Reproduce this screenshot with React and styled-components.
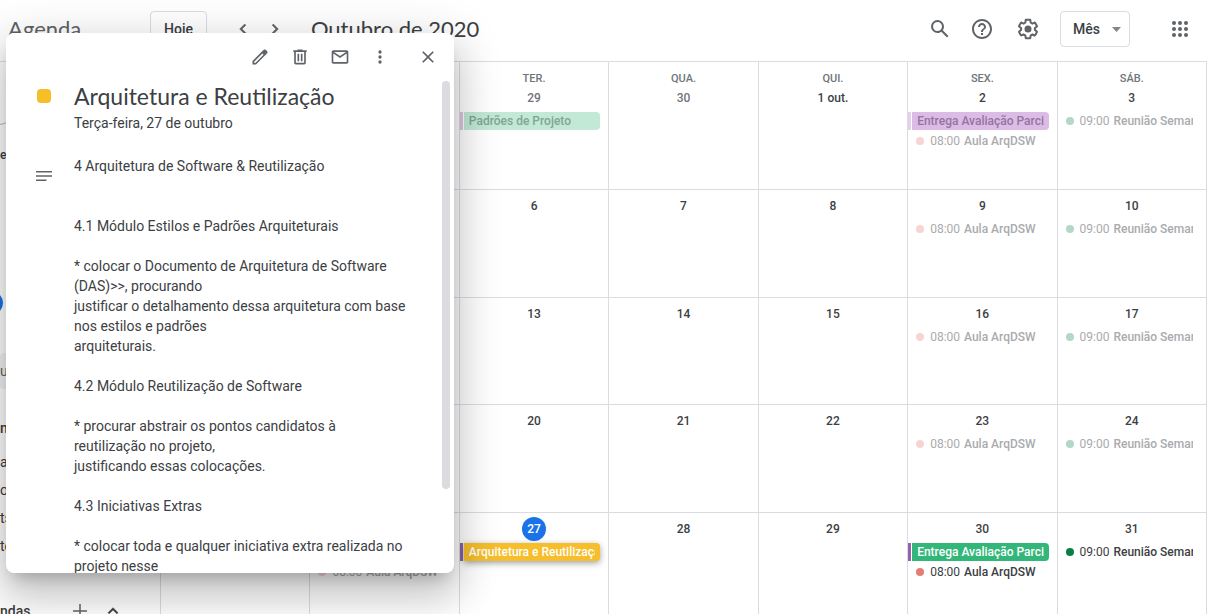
import React from 'react';
import styled, { createGlobalStyle } from 'styled-components';

const GlobalStyle = createGlobalStyle`
  *, *::before, *::after { box-sizing: border-box; }
  body {
    margin: 0;
    overflow: hidden;
    background: #fff;
    color: #3c4043;
    font-family: Roboto, "Liberation Sans", Arial, sans-serif;
  }
  button, select { font: inherit; color: inherit; }
  h1, h2, p, ul { margin: 0; padding: 0; font-weight: 400; }
`;

const Page = styled.div`
  position: relative;
  display: flex;
  flex-direction: column;
  height: 100vh;
  overflow: hidden;
`;

const Header = styled.header`
  display: flex;
  align-items: center;
  flex: none;
  height: 62px;
  padding: 0 7px 4px 8px;
  border-bottom: 1px solid #dadce0;
`;

const Brand = styled.span`
  width: 142px;
  font-family: Lato, Roboto, sans-serif;
  font-size: 22px;
  line-height: 28px;
  color: #5f6368;
`;

const OutlineButton = styled.button`
  height: 36px;
  padding: 0 13px;
  border: 1px solid #dadce0;
  border-radius: 4px;
  background: transparent;
  font-size: 14px;
  font-weight: 500;
`;

const Pager = styled.div`
  display: flex;
  margin: 0 20px;
`;

const IconButton = styled.button`
  display: inline-flex;
  align-items: center;
  justify-content: center;
  width: ${(p) => p.$size}px;
  height: ${(p) => p.$size}px;
  padding: 0;
  border: 0;
  border-radius: 50%;
  background: transparent;
  color: #5f6368;
`;

const Period = styled.h1`
  flex: 1;
  font-family: Lato, Roboto, sans-serif;
  font-size: 22px;
  line-height: 28px;
  white-space: nowrap;
`;

const Tools = styled.div`
  display: flex;
  align-items: center;
  gap: 6px;
`;

const HelpTools = styled.div`
  display: flex;
  gap: 2px;
`;

const ViewPicker = styled.label`
  position: relative;
  margin: 0 24px 0 6px;
`;

const ViewSelect = styled.select`
  appearance: none;
  display: block;
  width: 70px;
  height: 36px;
  padding: 0 12px;
  border: 1px solid #dadce0;
  border-radius: 4px;
  background: transparent;
  font-size: 14px;
  font-weight: 500;
`;

const Caret = styled.svg`
  position: absolute;
  right: 9px;
  top: 16px;
  pointer-events: none;
`;

const Main = styled.main`
  display: flex;
  flex: 1;
  min-height: 0;
`;

const Sidebar = styled.aside`
  display: flex;
  flex-direction: column;
  flex: none;
  width: 160px;
  overflow: hidden;
  font-size: 14px;
  line-height: 28px;
`;

const CreateEdge = styled.svg`
  display: block;
  flex: none;
  margin-top: 60px;
`;

const MiniMonth = styled.div`
  display: flex;
  flex-direction: column;
  justify-content: space-between;
  flex: none;
  height: 174px;
  margin-top: 13px;
  overflow: hidden;
  font-size: 12px;
  font-weight: 500;
`;

const MiniToday = styled.span`
  width: 24px;
  height: 24px;
  margin-left: -21px;
  border-radius: 50%;
  background: #1a73e8;
`;

const PeopleSearch = styled.div`
  flex: none;
  height: 36px;
  margin-top: 38px;
  border-radius: 4px;
  background: #f1f3f4;
  line-height: 36px;
  color: #5f6368;
`;

const ListHeading = styled.h2`
  display: flex;
  align-items: center;
  gap: 38px;
  flex: none;
  height: 28px;
  margin-top: ${(p) => p.$top}px;
  font-size: 14px;
  font-weight: 500;
`;

const HeadingIcons = styled.span`
  display: flex;
  align-items: center;
  gap: 11px;
  color: #5f6368;
`;

const CalendarList = styled.ul`
  margin-top: 6px;
  list-style: none;
`;

const Month = styled.section`
  display: grid;
  flex: 1;
  align-self: flex-start;
  grid-template-columns: repeat(7, minmax(0, 1fr));
  grid-template-rows: 128px repeat(4, minmax(0, 1fr));
  min-height: 558px;
  border-left: 1px solid #dadce0;
`;

const Day = styled.div`
  display: flex;
  flex-direction: column;
  align-items: center;
  padding-top: ${(p) => (p.$first ? 8 : 4)}px;
  border-right: 1px solid #dadce0;
  border-bottom: 1px solid #dadce0;
`;

const Weekday = styled.span`
  height: 16px;
  font-size: 11px;
  font-weight: 500;
  line-height: 18px;
  color: #70757a;
`;

const DayNumber = styled.span`
  min-width: 24px;
  height: 24px;
  border-radius: 12px;
  font-size: 12px;
  font-weight: 500;
  line-height: 24px;
  text-align: center;
  color: ${(p) => (p.$today ? '#fff' : p.$outside ? '#70757a' : '#3c4043')};
  background: ${(p) => (p.$today ? '#1a73e8' : 'transparent')};
`;

const Events = styled.div`
  display: flex;
  flex-direction: column;
  gap: 2px;
  width: 100%;
  margin-top: 2px;
`;

const ChipRow = styled.div`
  display: flex;
  gap: 1px;
  height: 18px;
  padding-right: 8px;
`;

const ChipTail = styled.span`
  width: 3px;
  background: ${(p) => p.$color};
`;

const Chip = styled.button`
  flex: 1;
  min-width: 0;
  padding: 0 5px;
  border: 0;
  border-radius: 0 4px 4px 0;
  background: ${(p) => p.$bg};
  color: ${(p) => p.$fg};
  box-shadow: ${(p) => (p.$raised ? '0 2px 6px rgba(60, 64, 67, 0.5)' : 'none')};
  font-size: 12px;
  font-weight: 500;
  line-height: 18px;
  text-align: left;
`;

const Clip = styled.span`
  display: block;
  overflow: hidden;
  white-space: nowrap;
`;

const TimedEvent = styled.button`
  display: flex;
  align-items: center;
  width: 100%;
  height: 18px;
  padding: 0 13px 0 8px;
  border: 0;
  background: transparent;
  font-size: 12px;
  line-height: 18px;
  color: ${(p) => (p.$past ? '#a9abad' : '#3c4043')};
`;

const Dot = styled.span`
  flex: none;
  width: 8px;
  height: 8px;
  margin-right: 6px;
  border-radius: 50%;
  background: ${(p) => p.$color};
`;

const EventTitle = styled.span`
  margin-left: 4px;
  overflow: hidden;
  font-weight: 500;
  white-space: nowrap;
`;

const EmptySlot = styled.span`
  height: 18px;
`;

const Popup = styled.article`
  position: absolute;
  left: 6px;
  top: 33px;
  display: flex;
  flex-direction: column;
  width: 448px;
  height: 540px;
  overflow: hidden;
  border-radius: 8px;
  background: #fff;
  box-shadow:
    0 24px 38px 3px rgba(0, 0, 0, 0.14),
    0 9px 46px 8px rgba(0, 0, 0, 0.12),
    0 11px 15px -7px rgba(0, 0, 0, 0.2);
`;

const PopupActions = styled.div`
  display: flex;
  align-items: center;
  justify-content: flex-end;
  gap: 8px;
  flex: none;
  height: 48px;
  padding-right: 10px;
`;

const CloseSlot = styled.span`
  display: flex;
  margin-left: 8px;
`;

const PopupBody = styled.div`
  display: flex;
  flex: 1;
  min-height: 0;
  padding-right: 4px;
`;

const Details = styled.div`
  display: grid;
  grid-template-columns: 38px minmax(0, 1fr);
  column-gap: 15px;
  align-content: start;
  flex: 1;
  padding: 1px 0 0 15px;
  overflow: hidden;
`;

const Marker = styled.span`
  display: flex;
  align-items: flex-start;
  justify-content: center;
  padding: ${(p) => p.$top}px 0 0 8px;
`;

const ColorSquare = styled.span`
  width: 14px;
  height: 14px;
  border-radius: 4px;
  background: #f6bf26;
`;

const EventName = styled.h2`
  font-family: Lato, Roboto, sans-serif;
  font-size: 23px;
  line-height: 28px;
  white-space: nowrap;
`;

const EventDate = styled.p`
  margin-top: 3px;
  font-size: 14px;
  line-height: 20px;
`;

const Description = styled.p`
  margin-top: 23px;
  font-size: 14px;
  line-height: 20px;
  white-space: pre;
`;

const ScrollThumb = styled.span`
  flex: none;
  width: 8px;
  height: 408px;
  border-radius: 4px;
  background: #dadce0;
`;

const Icon = ({ size = 24, children }) => (
  <svg width={size} height={size} viewBox="0 0 24 24" fill="currentColor" aria-hidden="true">
    {children}
  </svg>
);

const description = `4 Arquitetura de Software & Reutilização


4.1 Módulo Estilos e Padrões Arquiteturais

* colocar o Documento de Arquitetura de Software
(DAS)>>, procurando
justificar o detalhamento dessa arquitetura com base
nos estilos e padrões
arquiteturais.

4.2 Módulo Reutilização de Software

* procurar abstrair os pontos candidatos à
reutilização no projeto,
justificando essas colocações.

4.3 Iniciativas Extras

* colocar toda e qualquer iniciativa extra realizada no
projeto nesse`;

const class8 = { time: '08:00', title: 'Aula ArqDSW', color: '#f8d5d2', past: true };
const meeting = { time: '09:00', title: 'Reunião Semanal', color: '#b3d8c5', past: true };

const days = [
  {}, {},
  { label: 'TER.', n: '29', outside: true, events: [{ chip: 'Padrões de Projeto', bg: '#c1e9d6', fg: '#82a594', tail: '#dcc4e2' }] },
  { label: 'QUA.', n: '30', outside: true },
  { label: 'QUI.', n: '1 out.' },
  { label: 'SEX.', n: '2', events: [{ chip: 'Entrega Avaliação Parcial', bg: '#dcbce6', fg: '#93759d', tail: '#e6d0ed' }, class8] },
  { label: 'SÁB.', n: '3', events: [meeting] },
  {}, {}, { n: '6' }, { n: '7' }, { n: '8' }, { n: '9', events: [class8] }, { n: '10', events: [meeting] },
  {}, {}, { n: '13' }, { n: '14' }, { n: '15' }, { n: '16', events: [class8] }, { n: '17', events: [meeting] },
  {}, {}, { n: '20' }, { n: '21' }, { n: '22' }, { n: '23', events: [class8] }, { n: '24', events: [meeting] },
  {}, { n: '', events: [{ empty: true }, class8] },
  { n: '27', today: true, events: [{ chip: 'Arquitetura e Reutilização', bg: '#f5be2a', fg: '#fff', tail: '#9462ac', raised: true }] },
  { n: '28' }, { n: '29' },
  { n: '30', events: [
    { chip: 'Entrega Avaliação Parcial', bg: '#33b679', fg: '#fff', tail: '#9462ac' },
    { ...class8, color: '#e67c73', past: false },
  ] },
  { n: '31', events: [{ ...meeting, color: '#0b8043', past: false }] },
];

function Event({ event }) {
  if (event.empty) return <EmptySlot />;
  if (event.chip) {
    return (
      <ChipRow>
        <ChipTail $color={event.tail} />
        <Chip $bg={event.bg} $fg={event.fg} $raised={event.raised}><Clip>{event.chip}</Clip></Chip>
      </ChipRow>
    );
  }
  return (
    <TimedEvent $past={event.past}>
      <Dot $color={event.color} />
      <span>{event.time}</span>
      <EventTitle>{event.title}</EventTitle>
    </TimedEvent>
  );
}

export default function App() {
  return (
    <Page>
      <GlobalStyle />
      <Header>
        <Brand>Agenda</Brand>
        <OutlineButton>Hoje</OutlineButton>
        <Pager>
          <IconButton $size={32} aria-label="Mês anterior">
            <Icon size={20}><path d="M15.41 7.41 14 6l-6 6 6 6 1.41-1.41L10.83 12z" stroke="currentColor" strokeWidth=".6" /></Icon>
          </IconButton>
          <IconButton $size={32} aria-label="Próximo mês">
            <Icon size={20}><path d="M10 6 8.59 7.41 13.17 12l-4.58 4.59L10 18l6-6z" stroke="currentColor" strokeWidth=".6" /></Icon>
          </IconButton>
        </Pager>
        <Period>Outubro de 2020</Period>
        <Tools>
          <HelpTools>
            <IconButton $size={40} aria-label="Pesquisar">
              <Icon><path d="M20.49 19l-5.73-5.73C15.53 12.2 16 10.91 16 9.5A6.5 6.5 0 1 0 9.5 16c1.41 0 2.7-.47 3.77-1.24L19 20.49 20.49 19zM5 9.5C5 7.01 7.01 5 9.5 5S14 7.01 14 9.5 11.99 14 9.5 14 5 11.99 5 9.5z" /></Icon>
            </IconButton>
            <IconButton $size={40} aria-label="Ajuda">
              <Icon><path d="M11 18h2v-2h-2v2zm1-16C6.48 2 2 6.48 2 12s4.48 10 10 10 10-4.48 10-10S17.52 2 12 2zm0 18c-4.41 0-8-3.59-8-8s3.59-8 8-8 8 3.59 8 8-3.59 8-8 8zm0-14c-2.21 0-4 1.79-4 4h2c0-1.1.9-2 2-2s2 .9 2 2c0 2-3 1.75-3 5h2c0-2.25 3-2.5 3-5 0-2.21-1.79-4-4-4z" /></Icon>
            </IconButton>
          </HelpTools>
          <IconButton $size={40} aria-label="Configurações">
            <Icon>
              <path d="M13.85 22.25h-3.7c-.74 0-1.36-.54-1.45-1.27l-.27-1.89c-.27-.14-.53-.29-.79-.46l-1.8.72c-.7.26-1.47-.03-1.81-.65L2.2 15.53c-.35-.66-.2-1.44.36-1.88l1.53-1.19c-.01-.15-.02-.3-.02-.46 0-.15.01-.31.02-.46l-1.52-1.19c-.59-.45-.74-1.26-.37-1.88l1.85-3.19c.34-.62 1.11-.9 1.79-.63l1.81.73c.26-.17.52-.32.78-.46l.27-1.91c.09-.7.71-1.25 1.44-1.25h3.7c.74 0 1.36.54 1.45 1.27l.27 1.89c.27.14.53.29.79.46l1.8-.72c.71-.26 1.48.03 1.82.65l1.84 3.18c.36.66.2 1.44-.36 1.88l-1.52 1.19c.01.15.02.3.02.46s-.01.31-.02.46l1.52 1.19c.56.45.72 1.23.37 1.86l-1.86 3.22c-.34.62-1.11.9-1.8.63l-1.8-.72c-.26.17-.52.32-.78.46l-.27 1.91c-.1.68-.72 1.22-1.46 1.22zm-3.23-2h2.76l.37-2.55.53-.22c.44-.18.88-.44 1.34-.78l.45-.34 2.38.96 1.38-2.4-2.03-1.58.07-.56c.03-.26.06-.51.06-.78s-.03-.53-.06-.78l-.07-.56 2.03-1.58-1.39-2.4-2.39.96-.45-.35c-.42-.32-.87-.58-1.33-.77l-.52-.22-.37-2.55h-2.76l-.37 2.55-.53.21c-.44.19-.88.44-1.34.79l-.45.33-2.38-.95-1.39 2.39 2.03 1.58-.07.56a7 7 0 0 0-.06.79c0 .26.02.53.06.78l.07.56-2.03 1.58 1.38 2.4 2.39-.96.45.35c.43.33.86.58 1.33.77l.53.22.38 2.55z" />
              <circle cx="12" cy="12" r="3.5" />
            </Icon>
          </IconButton>
          <ViewPicker>
            <ViewSelect aria-label="Visualização"><option>Mês</option></ViewSelect>
            <Caret width="9" height="5" viewBox="0 0 9 5" fill="#80868b"><path d="M0 0h9L4.5 5z" /></Caret>
          </ViewPicker>
          <IconButton $size={40} aria-label="Google Apps">
            <Icon>
              {[6, 12, 18].map((y) => [6, 12, 18].map((x) => <circle key={`${x}-${y}`} cx={x} cy={y} r="2" />))}
            </Icon>
          </IconButton>
        </Tools>
      </Header>

      <Main>
        <Sidebar>
          <CreateEdge width="8" height="6" viewBox="0 0 8 6" fill="none" stroke="#b8babd">
            <path d="M0 2.5Q4 2 8 0" />
          </CreateEdge>
          <MiniMonth>
            <span>e</span>
            <MiniToday />
          </MiniMonth>
          <PeopleSearch>u</PeopleSearch>
          <ListHeading $top={25}>n</ListHeading>
          <CalendarList>
            <li>a</li>
            <li>o</li>
            <li>ts</li>
            <li>te</li>
          </CalendarList>
          <ListHeading $top={37}>
            ndas
            <HeadingIcons>
              <Icon size={24}><path d="M19 12.75h-6.25V19h-1.5v-6.25H5v-1.5h6.25V5h1.5v6.25H19z" /></Icon>
              <Icon size={20}><path d="M12 8l-6 6 1.41 1.41L12 10.83l4.59 4.58L18 14z" fill="#3c4043" stroke="#3c4043" strokeWidth=".6" /></Icon>
            </HeadingIcons>
          </ListHeading>
        </Sidebar>

        <Month aria-label="Outubro de 2020">
          {days.map((day, i) => (
            <Day key={i} $first={i < 7}>
              {day.label && <Weekday>{day.label}</Weekday>}
              {day.n !== undefined && <DayNumber $today={day.today} $outside={day.outside}>{day.n}</DayNumber>}
              {day.events && (
                <Events>{day.events.map((event, j) => <Event key={j} event={event} />)}</Events>
              )}
            </Day>
          ))}
        </Month>
      </Main>

      <Popup>
        <PopupActions>
          <IconButton $size={32} aria-label="Editar evento">
            <Icon size={20}><path d="M20.41 4.94l-1.35-1.35c-.78-.78-2.05-.78-2.83 0L13.4 6.41 3 16.82V21h4.18l10.46-10.46 2.77-2.77c.79-.78.79-2.05 0-2.83zm-14 14.12L5 19v-1.36l9.82-9.82 1.41 1.41-9.82 9.83z" /></Icon>
          </IconButton>
          <IconButton $size={32} aria-label="Excluir evento">
            <Icon size={20}>
              <path d="M15 4V3H9v1H4v2h1v13c0 1.1.9 2 2 2h10c1.1 0 2-.9 2-2V6h1V4h-5zm2 15H7V6h10v13z" />
              <path d="M9 8h2v9H9zm4 0h2v9h-2z" />
            </Icon>
          </IconButton>
          <IconButton $size={32} aria-label="Enviar e-mail aos convidados">
            <Icon size={20}><path d="M20 4H4c-1.1 0-1.99.9-1.99 2L2 18c0 1.1.9 2 2 2h16c1.1 0 2-.9 2-2V6c0-1.1-.9-2-2-2zm-.8 2L12 10.8 4.8 6h14.4zM4 18V7.87l8 5.33 8-5.33V18H4z" /></Icon>
          </IconButton>
          <IconButton $size={32} aria-label="Opções">
            <Icon size={20}>
              <circle cx="12" cy="6" r="2" />
              <circle cx="12" cy="12" r="2" />
              <circle cx="12" cy="18" r="2" />
            </Icon>
          </IconButton>
          <CloseSlot>
            <IconButton $size={32} aria-label="Fechar">
              <Icon size={20}><path d="M19 6.41 17.59 5 12 10.59 6.41 5 5 6.41 10.59 12 5 17.59 6.41 19 12 13.41 17.59 19 19 17.59 13.41 12z" /></Icon>
            </IconButton>
          </CloseSlot>
        </PopupActions>
        <PopupBody>
          <Details>
            <Marker $top={7}><ColorSquare /></Marker>
            <div>
              <EventName>Arquitetura e Reutilização</EventName>
              <EventDate>Terça-feira, 27 de outubro</EventDate>
            </div>
            <Marker $top={37}>
              <svg width="16" height="12" viewBox="0 0 16 12" fill="#5f6368" aria-hidden="true">
                <path d="M0 1h16v1.6H0zM0 5.2h16v1.6H0zM0 9.4h10.5V11H0z" />
              </svg>
            </Marker>
            <Description>{description}</Description>
          </Details>
          <ScrollThumb />
        </PopupBody>
      </Popup>
    </Page>
  );
}
